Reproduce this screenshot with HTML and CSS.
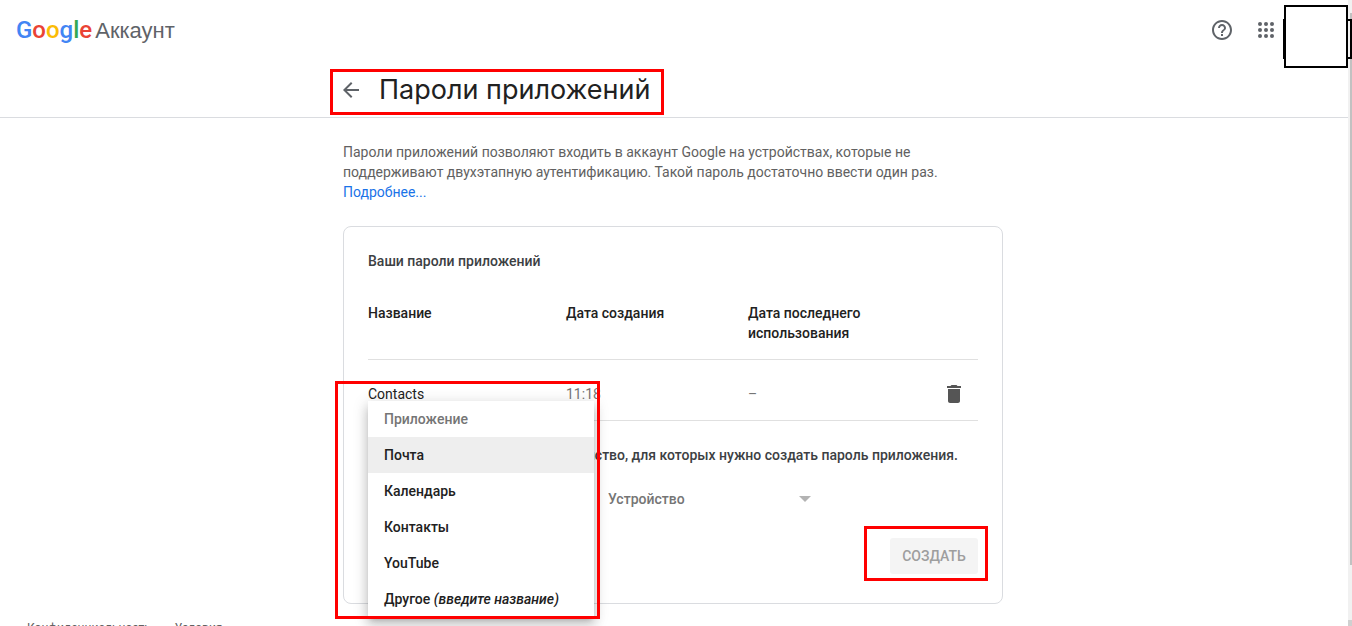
FILE: index.html
```html
<!DOCTYPE html>
<html lang="ru">
<head>
<meta charset="utf-8">
<meta name="viewport" content="width=device-width, initial-scale=1">
<title>Пароли приложений</title>
<link rel="stylesheet" href="styles.css">
</head>
<body>
<header class="header">
  <div class="topbar">
    <a class="brand" href="#"><span class="logo"><span class="blue">G</span><span class="red">o</span><span class="yellow">o</span><span class="blue">g</span><span class="green">l</span><span class="red">e</span></span><span class="product">Аккаунт</span></a>
    <div class="tools">
      <button class="tool" type="button" aria-label="Справка">
        <svg width="24" height="24" viewBox="0 0 24 24"><path d="M11 18h2v-2h-2v2zm1-16C6.480 2 2 6.480 2 12s4.480 10 10 10 10-4.480 10-10S17.520 2 12 2zm0 18c-4.410 0-8-3.590-8-8s3.590-8 8-8 8 3.590 8 8-3.590 8-8 8zm0-14c-2.210 0-4 1.790-4 4h2c0-1.100.9-2 2-2s2 .9 2 2c0 2-3 1.750-3 5h2c0-2.250 3-2.500 3-5 0-2.210-1.790-4-4-4z"/></svg>
      </button>
      <button class="tool" type="button" aria-label="Приложения Google">
        <svg width="24" height="24" viewBox="0 0 24 24"><g><circle cx="6" cy="6" r="2"/><circle cx="12" cy="6" r="2"/><circle cx="18" cy="6" r="2"/><circle cx="6" cy="12" r="2"/><circle cx="12" cy="12" r="2"/><circle cx="18" cy="12" r="2"/><circle cx="6" cy="18" r="2"/><circle cx="12" cy="18" r="2"/><circle cx="18" cy="18" r="2"/></g></svg>
      </button>
    </div>
  </div>
  <div class="gutter">
    <div class="column titlebar">
      <button class="back" type="button" aria-label="Назад">
        <svg width="24" height="24" viewBox="0 0 24 24"><path d="M20 11H7.830l5.590-5.590L12 4l-8 8 8 8 1.410-1.410L7.830 13H20v-2z"/></svg>
      </button>
      <h1 class="title">Пароли приложений</h1>
      <span class="mark mark-title"></span>
    </div>
  </div>
</header>
<main class="gutter">
  <div class="column">
  <p class="intro">Пароли приложений позволяют входить в аккаунт Google на устройствах, которые не поддерживают двухэтапную аутентификацию. Такой пароль достаточно ввести один раз. <a href="#">Подробнее...</a></p>
  <section class="card">
    <h2 class="heading">Ваши пароли приложений</h2>
    <table class="passwords">
      <thead>
        <tr><th class="col-name">Название</th><th class="col-created">Дата создания</th><th class="col-used">Дата последнего использования</th><th></th></tr>
      </thead>
      <tbody>
        <tr><td class="name">Contacts</td><td>11:18</td><td>–</td><td class="action"><button class="delete" type="button" aria-label="Удалить"><svg width="24" height="24" viewBox="0 0 24 24"><path d="M6 19c0 1.100.9 2 2 2h8c1.100 0 2-.9 2-2V7H6v12zM19 4h-3.500l-1-1h-5l-1 1H5v2h14V4z"/></svg></button></td></tr>
      </tbody>
    </table>
    <p class="prompt">Выберите приложение и устройство, для которых нужно создать пароль приложения.</p>
    <div class="fields">
      <div class="app-field">
        <div class="menu" role="listbox" aria-label="Приложение">
          <button class="option placeholder" type="button" role="option">Приложение</button>
          <button class="option active" type="button" role="option" aria-selected="true">Почта</button>
          <button class="option" type="button" role="option">Календарь</button>
          <button class="option" type="button" role="option">Контакты</button>
          <button class="option" type="button" role="option">YouTube</button>
          <button class="option" type="button" role="option">Другое <em>(введите название)</em></button>
        </div>
        <span class="mark mark-menu"></span>
      </div>
      <div class="device-field">
        <select class="select" aria-label="Устройство"><option>Устройство</option></select>
        <svg class="caret" width="12" height="6" viewBox="0 0 12 6"><path d="M0 0h12L6 6z"/></svg>
      </div>
    </div>
    <div class="actions">
      <button class="create" type="button" disabled>СОЗДАТЬ</button>
      <span class="mark mark-create"></span>
    </div>
  </section>
  </div>
</main>
<footer class="footer"><a href="#">Конфиденциальность</a><a href="#">Условия</a></footer>
<div class="scrollbar"><div class="thumb"></div></div>
<div class="avatar-back"></div>
<div class="avatar"></div>
</body>
</html>
```
FILE: styles.css
```css
* { box-sizing: border-box; }

body {
  position: relative;
  height: 100vh;
  margin: 0;
  overflow: hidden;
  background: #fff;
  color: #212121;
  font: 14px/20px Roboto, "Liberation Sans", sans-serif;
}

h1, h2, p { margin: 0; }
a { color: #1a73e8; text-decoration: none; }
button { margin: 0; padding: 0; border: 0; background: none; font: inherit; color: inherit; }
svg { display: block; fill: currentColor; }

.header {
  margin-right: 4px;
  border-bottom: 1px solid #dadce0;
}
.topbar {
  display: flex;
  justify-content: space-between;
  align-items: center;
  height: 60px;
  padding: 0 70px 0 16px;
}
.brand { display: flex; align-items: baseline; gap: 3px; }
.logo { font: 500 24px/32px Roboto, sans-serif; }
.product { color: #5f6368; font: 22px/32px "Liberation Sans", sans-serif; }
.blue { color: #4285f4; }
.red { color: #ea4335; }
.yellow { color: #fbbc05; }
.green { color: #34a853; }
.tools { display: flex; gap: 20px; color: #5f6368; }

.gutter { padding-right: 2px; }
main.gutter { padding-right: 6px; }
.column {
  position: relative;
  max-width: 660px;
  margin: 0 auto;
}
.titlebar {
  display: flex;
  align-items: center;
  gap: 16px;
  height: 57px;
  padding-top: 2px;
}
.back { color: #5f6368; margin-left: -4px; }
.title { font: 400 27px/36px Inter, Roboto, sans-serif; }

.intro { max-width: 624px; padding-top: 24px; color: #616161; }

.card {
  margin-top: 24px;
  padding: 24px 24px 29px;
  border: 1px solid #dadce0;
  border-radius: 8px;
}
.heading { color: #3c4043; font: inherit; font-weight: 500; }

.passwords {
  width: 100%;
  margin-top: 32px;
  border-collapse: collapse;
  text-align: left;
}
.passwords th { padding: 0 16px 16px 0; font-weight: 500; vertical-align: top; }
.passwords td { padding: 24px 0 16px; color: #757575; }
.passwords tr { border-bottom: 1px solid #e0e0e0; }
.passwords .name { color: #212121; }
.passwords .action { padding: 20px 12px 12px 0; color: #555; }
.delete { display: block; margin-left: auto; }
.col-name { width: 198px; }
.col-created { width: 182px; }
.col-used { width: 150px; }

.prompt { margin-top: 24px; padding-right: 20px; color: #3c4043; font-weight: 500; text-align: right; }

.fields { display: flex; height: 36px; margin-top: 16px; }
.app-field { position: relative; width: 224px; }
.menu {
  position: absolute;
  top: -80px;
  left: 0;
  width: 226px;
  background: #fff;
  box-shadow: 0 8px 10px 1px rgba(0,0,0,.14), 0 3px 14px 2px rgba(0,0,0,.12), 0 5px 5px -3px rgba(0,0,0,.2);
}
.option {
  display: block;
  width: 100%;
  height: 36px;
  padding: 0 16px;
  font-weight: 500;
  text-align: left;
}
.option.placeholder { color: #757575; }
.option.active { background: #eee; }

.device-field { position: relative; width: 236px; }
.select {
  width: 100%;
  height: 36px;
  padding: 0 16px;
  border: 0;
  background: none;
  color: #757575;
  font: inherit;
  font-weight: 500;
  appearance: none;
}
.caret { position: absolute; top: 15px; right: 17px; color: #b3b3b3; }

.actions { position: relative; display: flex; justify-content: flex-end; margin-top: 21px; }
.create {
  width: 88px;
  height: 36px;
  border-radius: 3px;
  background: #f4f4f4;
  color: #9e9e9e;
  font-weight: 500;
}

.mark { position: absolute; border: 3px solid #f00; pointer-events: none; }
.mark-title { top: 9px; left: -13px; width: 334px; height: 46px; }
.mark-menu { top: -100px; left: -33px; width: 265px; height: 238px; }
.mark-create { top: -12px; right: -10px; width: 124px; height: 55px; }

.footer { display: flex; gap: 24px; padding: 14px 27px; font-size: 12px; }
.footer a { color: #616161; }

.scrollbar {
  position: absolute;
  top: 0;
  right: 0;
  bottom: 0;
  width: 4px;
  padding: 13px 0 0 2px;
  background: #f1f1f1;
  border-bottom: 6px solid #d0d0d0;
}
.thumb { height: 91%; background: #c1c1c1; }
.avatar-back { position: absolute; top: 19px; right: 0; width: 69px; height: 40px; border: 2px solid #000; }
.avatar { position: absolute; top: 5px; right: 4px; width: 64px; height: 63px; border: 2px solid #000; background: #fff; }
```
